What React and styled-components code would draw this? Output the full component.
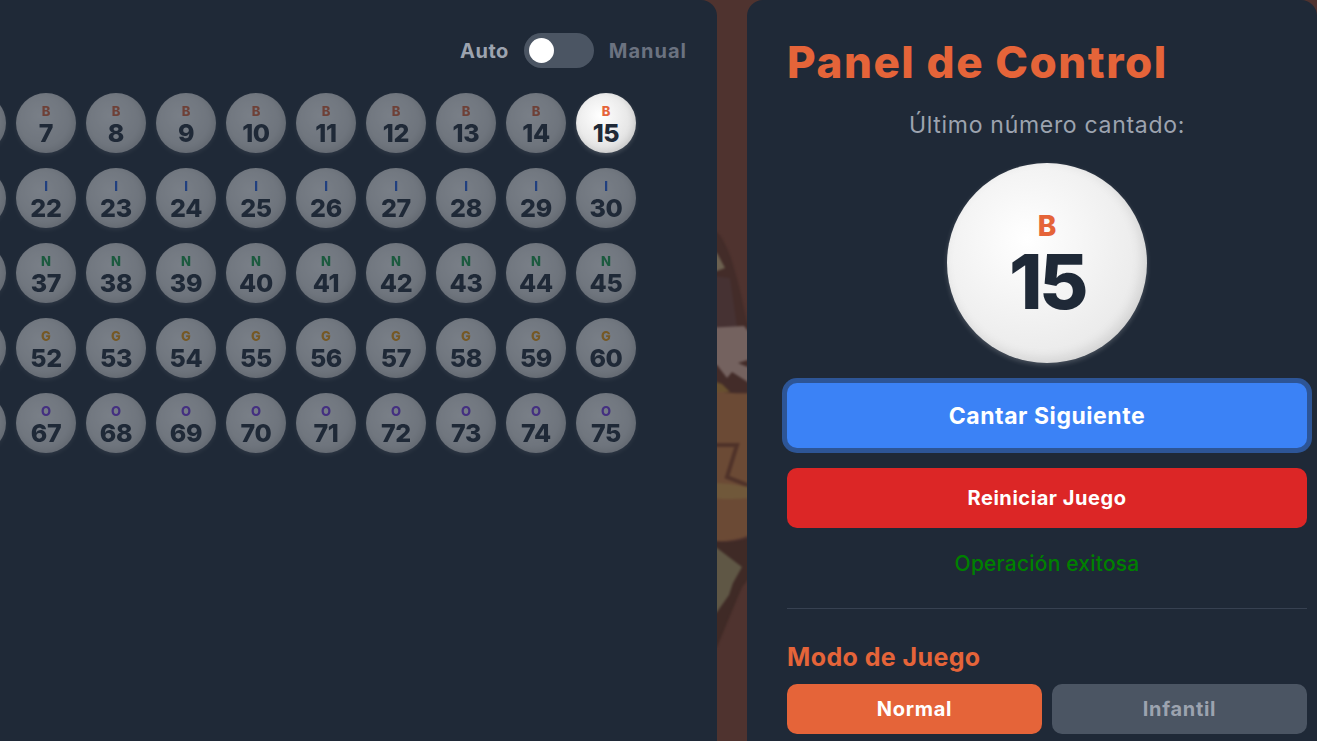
import React from "react"
import styled, { createGlobalStyle } from "styled-components"

const FONT = `"Inter", "Liberation Sans", sans-serif`

const Global = createGlobalStyle`
  html, body {
    margin: 0;
    height: 100%;
    overflow: hidden;
    background: #4f332f;
  }
  * { box-sizing: border-box; }
`

const Page = styled.div`
  display: flex;
  justify-content: flex-end;
  width: 1317px;
  height: 741px;
  overflow: hidden;
  font-family: ${FONT};
  background: #4f332f;
`

const Panel = styled.section`
  flex: none;
  height: 100%;
  background: #1f2937;
  border-radius: 16px 16px 0 0;
`

const BoardPanel = styled(Panel)`
  width: 1121px;
  padding: 33px 30px 0 0;
`

const ModeRow = styled.div`
  display: flex;
  justify-content: flex-end;
  align-items: center;
  gap: 15px;
  height: 35px;
  margin-bottom: 25px;
`

const ModeLabel = styled.span`
  font-size: 20px;
  font-weight: 700;
  letter-spacing: ${p => (p.$on ? "0.5px" : "1px")};
  color: ${p => (p.$on ? "#9ca3af" : "#6b7280")};
`

const Track = styled.div`
  display: flex;
  align-items: center;
  width: 70px;
  height: 35px;
  padding: 0 5px;
  border-radius: 18px;
  background: #4b5563;
`

const Knob = styled.div`
  width: 25px;
  height: 25px;
  border-radius: 50%;
  background: #fff;
`

const Board = styled.div`
  display: flex;
  flex-direction: column;
  align-items: flex-end;
  gap: 15px;
  padding-right: 51px;
`

const BallRow = styled.div`
  display: flex;
  gap: 10px;
`

const Ball = styled.div`
  display: flex;
  flex-direction: column;
  align-items: center;
  justify-content: center;
  width: 60px;
  height: 60px;
  padding-top: 4px;
  border-radius: 50%;
  background: radial-gradient(circle at 40% 38%, #fff, #d4d4d4);
  box-shadow: 0 2px 4px rgba(255, 255, 255, 0.16), inset -2px -2px 6px rgba(0, 0, 0, 0.1);
  opacity: ${p => (p.$called ? 1 : 0.4)};
  color: #1f2937;
`

const BallLetter = styled.span`
  font-size: 13px;
  line-height: 13px;
  font-weight: 800;
  color: ${p => p.$color};
`

const BallNumber = styled.span`
  margin-top: 3px;
  font-size: 25px;
  line-height: 25px;
  font-weight: 800;
  letter-spacing: -0.3px;
`

const Gap = styled.div`
  flex: none;
  width: 30px;
  height: 100%;
  svg { display: block; }
  g { filter: blur(1px); }
`

const ControlPanel = styled(Panel)`
  width: 570px;
  padding: 32px 10px 0 40px;
`

const Title = styled.h1`
  margin: 0;
  font-size: 44px;
  line-height: 60px;
  font-weight: 800;
  letter-spacing: 1.55px;
  color: #e56439;
`

const LastLabel = styled.p`
  margin: 19px 0 0;
  font-size: 23px;
  line-height: 28px;
  letter-spacing: 0.7px;
  text-align: center;
  color: #9ca3af;
`

const BigBall = styled.div`
  display: flex;
  flex-direction: column;
  align-items: center;
  justify-content: center;
  width: 200px;
  height: 200px;
  margin: 24px auto 20px;
  padding-top: 2px;
  border-radius: 50%;
  background: radial-gradient(circle at 40% 38%, #fff, #e2e2e2);
  box-shadow: 0 2px 5px rgba(255, 255, 255, 0.2), inset -4px -4px 12px rgba(0, 0, 0, 0.1);
`

const BigLetter = styled.span`
  font-size: 28px;
  line-height: 34px;
  font-weight: 800;
  color: #e56439;
`

const BigNumber = styled.span`
  font-size: 76px;
  line-height: 76px;
  font-weight: 800;
  letter-spacing: -3.5px;
  color: #1f2937;
`

const Button = styled.button`
  display: block;
  width: 100%;
  border: 0;
  border-radius: 10px;
  font-family: inherit;
  font-weight: 700;
  color: #fff;
`

const NextButton = styled(Button)`
  height: 65px;
  font-size: 23px;
  letter-spacing: 0.55px;
  background: #3b82f6;
  box-shadow: 0 0 0 5px rgba(59, 130, 246, 0.5);
`

const ResetButton = styled(Button)`
  height: 60px;
  margin-top: 20px;
  font-size: 20px;
  letter-spacing: 0.55px;
  background: #dc2626;
`

const Status = styled.p`
  margin: 20px 0 0;
  font-size: 21px;
  line-height: 31px;
  font-weight: 500;
  letter-spacing: 0.2px;
  text-align: center;
  color: #008000;
`

const Divider = styled.hr`
  margin: 29px 0 0;
  border: 0;
  border-top: 1px solid #374151;
`

const Subtitle = styled.h2`
  margin: 30px 0 9px;
  font-size: 25px;
  line-height: 36px;
  font-weight: 700;
  letter-spacing: 0.4px;
  color: #e56439;
`

const ModeButtons = styled.div`
  display: grid;
  grid-template-columns: 1fr 1fr;
  gap: 10px;
`

const ModeButton = styled(Button)`
  height: 50px;
  font-size: 20px;
  letter-spacing: 0.7px;
  background: ${p => (p.$active ? "#e56439" : "#4b5563")};
  color: ${p => (p.$active ? "#fff" : "#9ca3af")};
`

const COLUMNS = [
  ["B", "#e56439", 1],
  ["I", "#2563eb", 16],
  ["N", "#16a34a", 31],
  ["G", "#f59e0b", 46],
  ["O", "#7c3aed", 61],
]

// the blurred picture behind the page, seen only between the two panels
function Backdrop() {
  return (
    <svg width="30" height="741" viewBox="717 0 30 741">
      <g>
        <path d="M705 225 L717 232 C730 245 738 280 747 322 L760 330 L760 400 L705 400 Z" fill="#432c29" />
        <path d="M705 253 L717 253 L725 268 L717 271 L705 271 Z" fill="#6c6150" />
        <path d="M705 275 L730 278 L737 327 L705 330 Z" fill="#463233" />
        <path d="M705 328 L744 326 L760 345 L760 356 L738 363 L760 372 L760 390 L732 372 L727 378 L717 365 L705 365 Z" fill="#74625f" />
        <path d="M705 388 Q735 396 760 392 L760 530 Q735 545 705 540 Z" fill="#6b4a35" />
        <path d="M705 378 L722 384 L730 392 L705 392 Z" fill="#68502f" />
        <path d="M705 445 L737 445 L727 477 L760 490" fill="none" stroke="#4f3229" strokeWidth="4" />
        <path d="M705 482 L730 484 L760 489 L760 497 Q730 501 705 497 Z" fill="#70583a" />
        <path d="M705 538 Q730 548 760 533 L760 565 L742 587 L717 647 L705 655 Z" fill="#3f2a26" />
        <path d="M705 545 L717 548 L742 567 L733 583 L729 595 L717 612 L705 620 Z" fill="#5f5745" />
      </g>
    </svg>
  )
}

export default function App() {
  return (
    <Page>
      <Global />
      <BoardPanel>
        <ModeRow>
          <ModeLabel $on>Auto</ModeLabel>
          <Track><Knob /></Track>
          <ModeLabel>Manual</ModeLabel>
        </ModeRow>
        <Board>
          {COLUMNS.map(([letter, color, start]) => (
            <BallRow key={letter}>
              {Array.from({ length: 15 }, (_, i) => start + i).map(n => (
                <Ball key={n} $called={n === 15}>
                  <BallLetter $color={color}>{letter}</BallLetter>
                  <BallNumber>{n}</BallNumber>
                </Ball>
              ))}
            </BallRow>
          ))}
        </Board>
      </BoardPanel>
      <Gap><Backdrop /></Gap>
      <ControlPanel>
        <Title>Panel de Control</Title>
        <LastLabel>Último número cantado:</LastLabel>
        <BigBall>
          <BigLetter>B</BigLetter>
          <BigNumber>15</BigNumber>
        </BigBall>
        <NextButton>Cantar Siguiente</NextButton>
        <ResetButton>Reiniciar Juego</ResetButton>
        <Status>Operación exitosa</Status>
        <Divider />
        <Subtitle>Modo de Juego</Subtitle>
        <ModeButtons>
          <ModeButton $active>Normal</ModeButton>
          <ModeButton>Infantil</ModeButton>
        </ModeButtons>
      </ControlPanel>
    </Page>
  )
}
